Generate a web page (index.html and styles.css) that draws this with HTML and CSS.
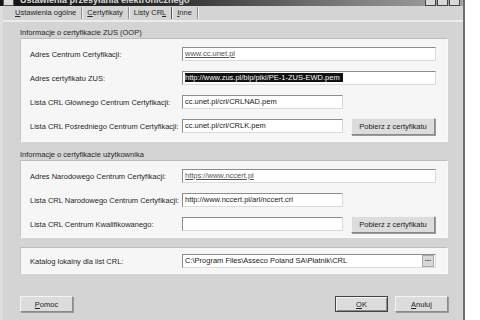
FILE: index.html
```html
<!DOCTYPE html>
<html lang="pl">
<head>
  <meta charset="UTF-8">
  <title>Ustawienia przesyłania elektronicznego</title>
  <link rel="stylesheet" href="styles.css">
</head>
<body>
  <div class="window">
    <div class="titlebar">
      <span class="title-icon"></span>
      <span class="title-text">Ustawienia przesyłania elektronicznego</span>
      <span class="title-buttons">
        <span class="tb"></span><span class="tb"></span><span class="tb"></span>
      </span>
    </div>

    <div class="frame">
      <div class="tabs">
        <span class="tab"><u>U</u>stawienia ogólne</span>
        <span class="tab"><u>C</u>ertyfikaty</span>
        <span class="tab active">Listy CR<u>L</u></span>
        <span class="tab"><u>I</u>nne</span>
      </div>
      <div class="tabline"></div>

      <div class="content">
        <div class="group-label first">Informacje o certyfikacie ZUS (OOP)</div>
        <div class="panel">
          <div class="row">
            <label>Adres Centrum Certyfikacji:</label>
            <div class="field long"><span class="link">www.cc.unet.pl</span></div>
          </div>
          <div class="row">
            <label>Adres certyfikatu ZUS:</label>
            <div class="field long"><span class="selected">http://www.zus.pl/bip/piki/PE-1-ZUS-EWD.pem</span></div>
          </div>
          <div class="row">
            <label>Lista CRL Głównego Centrum Certyfikacji:</label>
            <div class="field short">cc.unet.pl/crl/CRLNAD.pem</div>
          </div>
          <div class="row">
            <label>Lista CRL Pośredniego Centrum Certyfikacji:</label>
            <div class="field short">cc.unet.pl/crl/CRLK.pem</div>
            <button class="btn side">Pobierz z certyfikatu</button>
          </div>
        </div>

        <div class="group-label">Informacje o certyfikacie użytkownika</div>
        <div class="panel user">
          <div class="row">
            <label>Adres Narodowego Centrum Certyfikacji:</label>
            <div class="field long"><span class="link">https://www.nccert.pl</span></div>
          </div>
          <div class="row">
            <label>Lista CRL Narodowego Centrum Certyfikacji:</label>
            <div class="field short">http://www.nccert.pl/arl/nccert.crl</div>
          </div>
          <div class="row">
            <label>Lista CRL Centrum Kwalifikowanego:</label>
            <div class="field short"></div>
            <button class="btn side">Pobierz z certyfikatu</button>
          </div>
        </div>

        <div class="panel local">
          <div class="row">
            <label>Katalog lokalny dla list CRL:</label>
            <div class="field long path">
              <span class="path-text">C:\Program Files\Asseco Poland SA\Płatnik\CRL</span>
              <span class="browse">...</span>
            </div>
          </div>
        </div>

        <div class="footer">
          <button class="btn"><u>P</u>omoc</button>
          <div class="footer-right">
            <button class="btn default"><u>O</u>K</button>
            <button class="btn"><u>A</u>nuluj</button>
          </div>
        </div>
      </div>
    </div>
  </div>
</body>
</html>
```

FILE: styles.css
```css
body {
  margin: 0;
  background: #fff;
  font-family: "Liberation Sans", Arial, sans-serif;
  font-size: 7.5px;
  color: #262626;
}
.window {
  width: 463px;
  height: 320px;
  background: #d4d4d4;
  border-right: 2px solid #6e6e6e;
  display: flex;
  flex-direction: column;
}
.titlebar {
  height: 6px;
  overflow: hidden;
  display: flex;
  align-items: flex-end;
  background: linear-gradient(to right, #141414, #2c2c2c 35%, #7c7c7c 75%, #a4a4a4);
}
.title-icon {
  width: 9px;
  height: 9px;
  margin: 0 6px 0 3px;
  background: #ddd;
  border: 1px solid #555;
  flex: none;
}
.title-text {
  color: #d8d8d8;
  font-weight: bold;
  font-size: 9px;
  line-height: 12px;
  white-space: nowrap;
}
.title-buttons {
  margin-left: auto;
  margin-right: 3px;
  display: flex;
  gap: 1px;
}
.tb {
  width: 11px;
  height: 10px;
  background: #d8d8d8;
  border: 1px solid #444;
  box-sizing: border-box;
}
.frame {
  flex: 1;
  border-left: 3px solid #dedede;
  display: flex;
  flex-direction: column;
}
.tabs {
  display: flex;
  align-items: center;
  height: 14px;
  padding-left: 7px;
}
.tab {
  padding: 0 5px;
  line-height: 12px;
  border-right: 1px solid #8c8c8c;
  box-shadow: 1px 0 0 #f2f2f2;
  white-space: nowrap;
}
.tab.active {
  border-right-color: #555;
}
.tabline {
  height: 2px;
  background: #ececec;
}
.content {
  padding-left: 17px;
  width: 428px;
}
.group-label {
  margin-top: 7px;
  height: 11px;
  line-height: 11px;
}
.group-label.first {
  margin-top: 5px;
}
.panel {
  background: #f6f6f6;
  border: 1px solid;
  border-color: #bcbcbc #fafafa #fafafa #c4c4c4;
  padding: 3px 0 3px 9px;
}
.panel.user {
  padding-bottom: 1px;
}
.panel.local {
  margin-top: 9px;
  padding: 1px 0 0 9px;
}
.row {
  display: flex;
  align-items: center;
  height: 24px;
}
.row label {
  width: 152px;
  flex: none;
  white-space: nowrap;
}
.field {
  height: 14px;
  box-sizing: border-box;
  background: #fff;
  border: 1px solid;
  border-color: #8c8c8c #dadada #dadada #8c8c8c;
  padding: 0 2px;
  line-height: 12px;
  white-space: nowrap;
  overflow: hidden;
  color: #1a1a1a;
}
.field.long {
  width: 254px;
}
.field.short {
  width: 161px;
}
.link {
  color: #555;
  text-decoration: underline;
}
.selected {
  background: #111;
  color: #f4f4f4;
  padding-right: 3px;
}
.field.path {
  display: flex;
  align-items: center;
  padding-right: 1px;
}
.path-text {
  flex: 1;
}
.browse {
  width: 10px;
  height: 10px;
  line-height: 6px;
  text-align: center;
  background: #d8d8d8;
  border: 1px solid #a8a8a8;
  font-weight: bold;
  color: #333;
}
.btn {
  font-family: inherit;
  font-size: inherit;
  color: #222;
  background: #dcdcdc;
  border: 1px solid;
  border-color: #f4f4f4 #8a8a8a #8a8a8a #f4f4f4;
  box-shadow: 1px 1px 0 #9a9a9a;
  padding: 0;
  width: 53px;
  height: 16px;
}
.btn.side {
  width: 84px;
  height: 17px;
  margin-left: 8px;
}
.btn.default {
  border-color: #444;
  box-shadow: inset 1px 1px 0 #f4f4f4, inset -1px -1px 0 #8a8a8a;
}
.footer {
  margin-top: 22px;
  display: flex;
  justify-content: space-between;
}
.footer-right {
  display: flex;
  gap: 7px;
}
```
